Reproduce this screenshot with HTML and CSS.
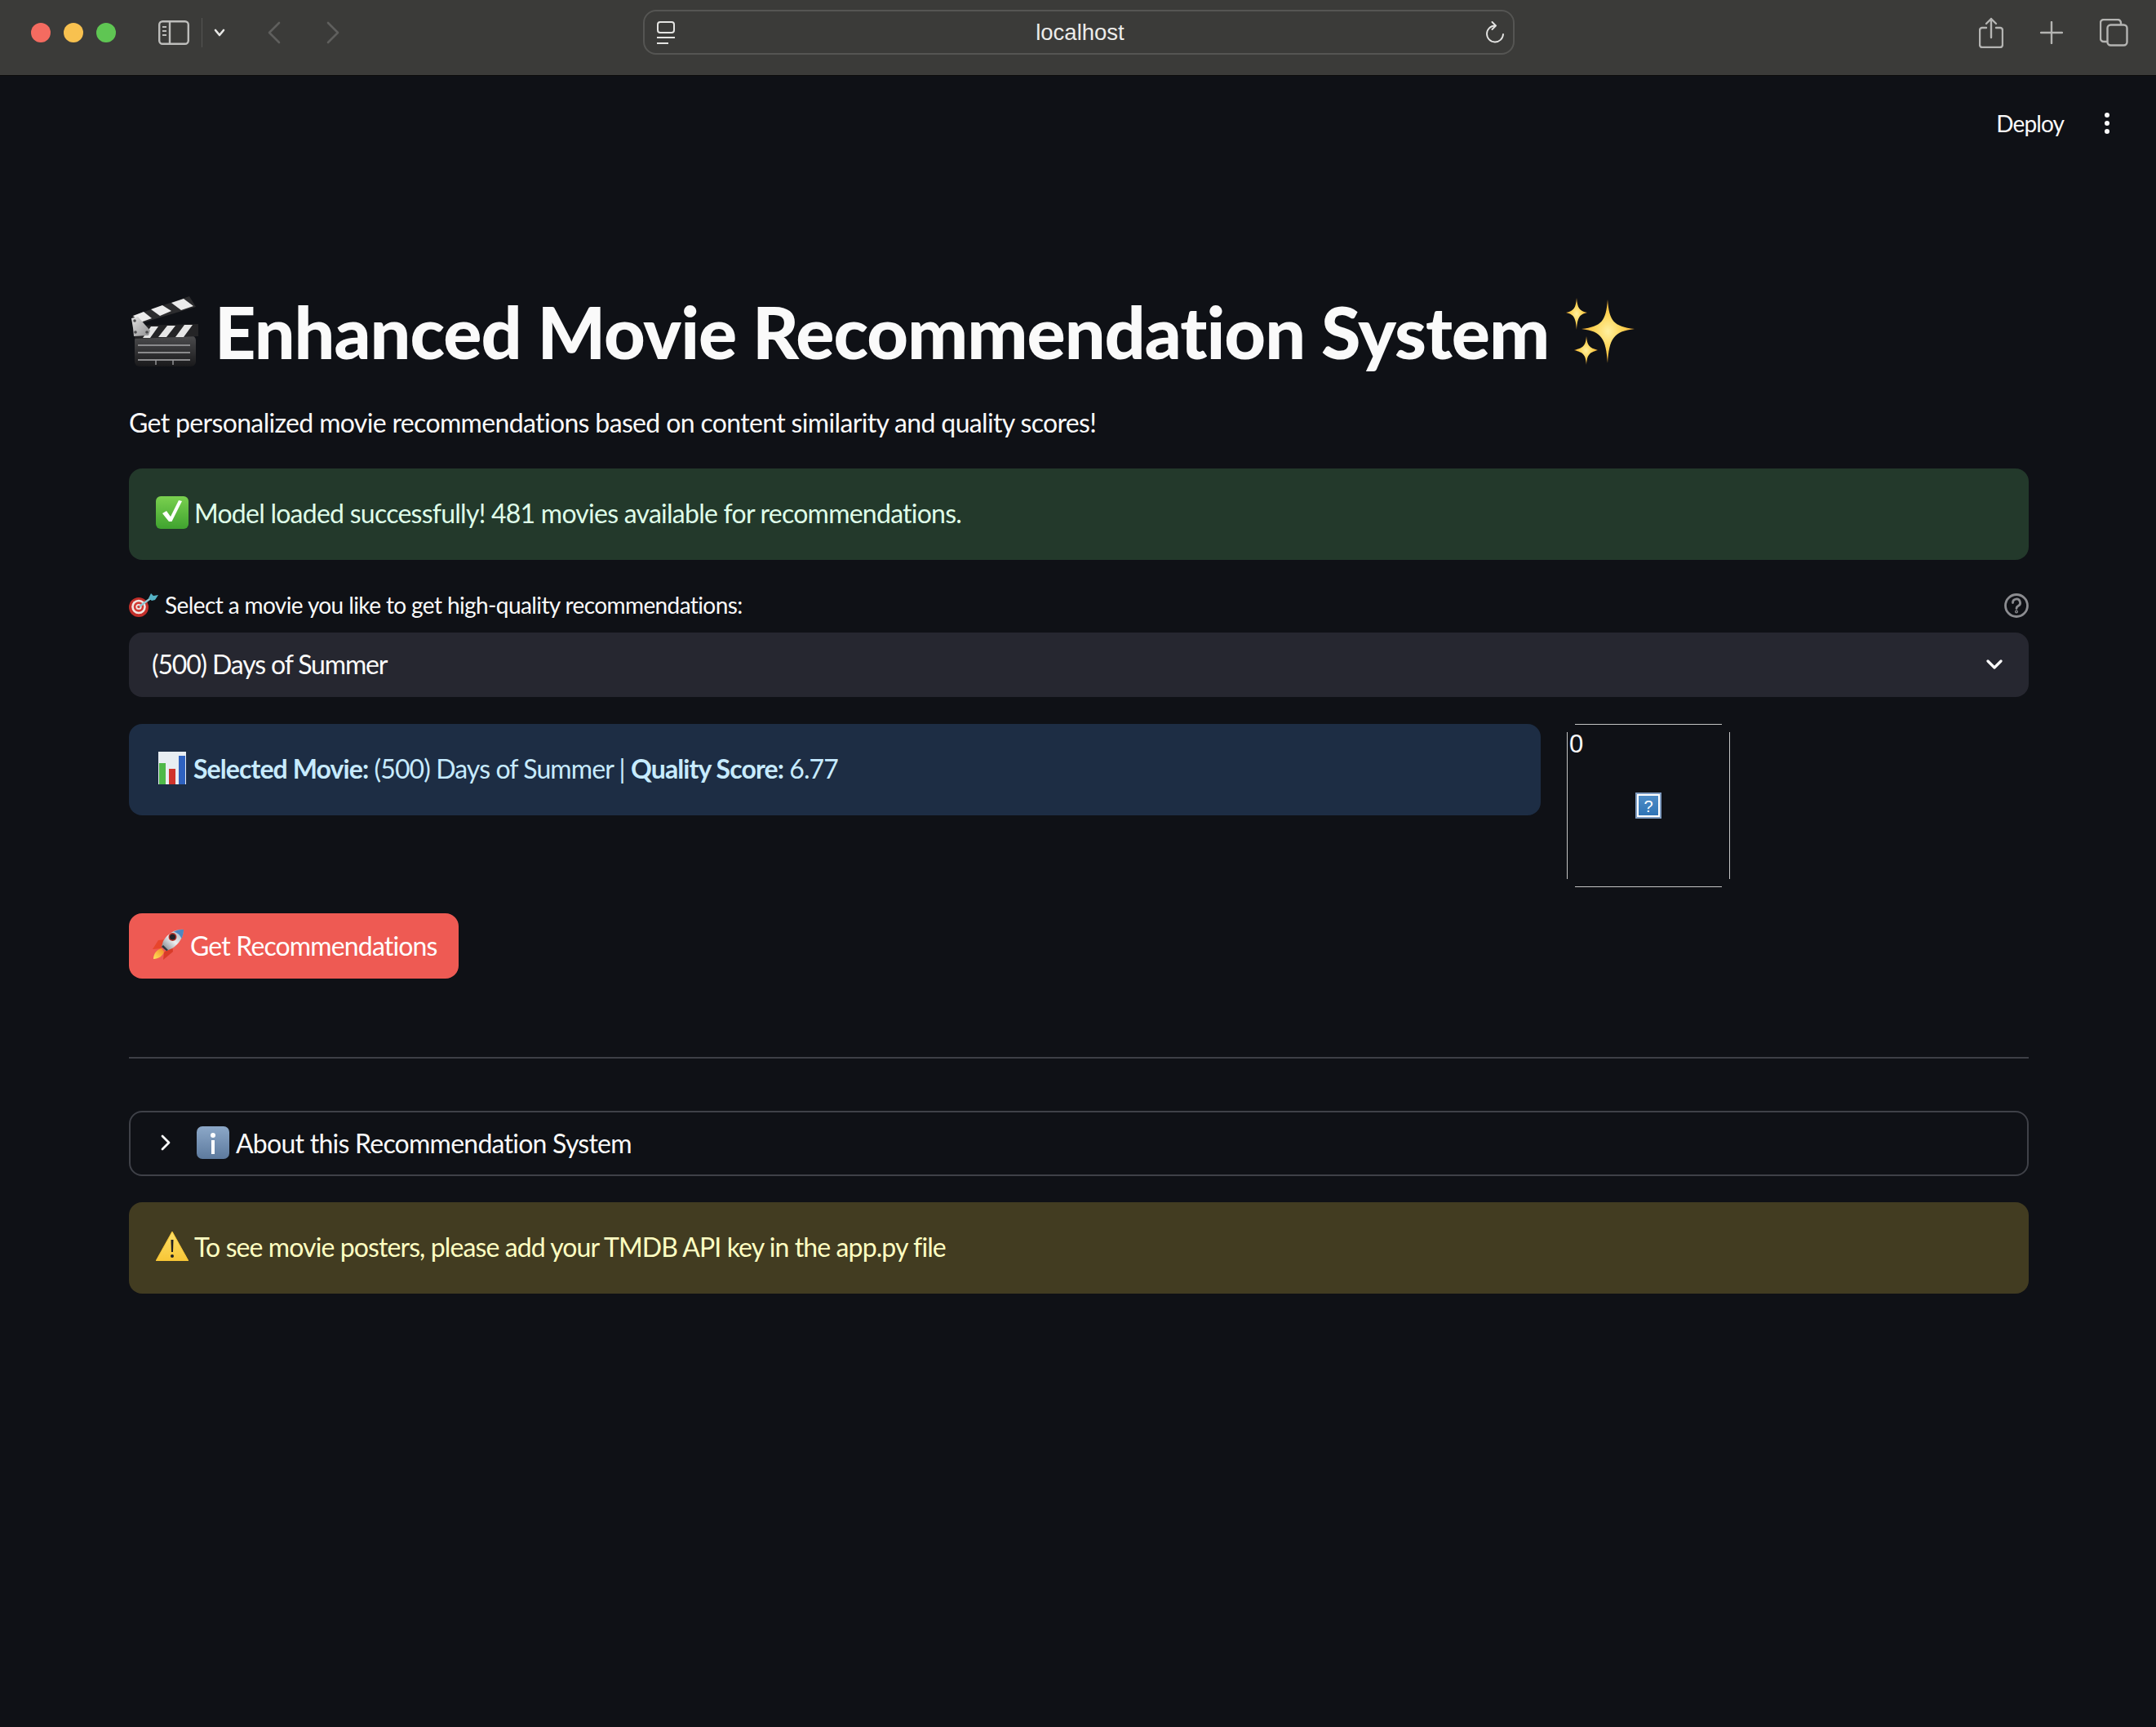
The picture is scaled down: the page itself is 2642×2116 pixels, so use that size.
FILE: index.html
```html
<!DOCTYPE html>
<html lang="en">
<head>
  <meta charset="UTF-8">
  <title>localhost</title>
  <link rel="stylesheet" href="styles.css">
</head>
<body>

  <div class="browser-bar">
    <div class="bar-left">
      <span class="light red"></span>
      <span class="light yellow"></span>
      <span class="light green"></span>
      <svg class="icon-sidebar" viewBox="0 0 38 30" fill="none" stroke="#bdbdbb" stroke-width="2.4">
        <rect x="1.2" y="1.2" width="35.6" height="27.6" rx="4"/>
        <path d="M14 1v28"/>
        <path d="M5 8h5M5 13h5M5 18h5" stroke-width="2"/>
      </svg>
      <span class="bar-divider"></span>
      <svg class="icon-down" viewBox="0 0 14 10" fill="none" stroke="#e8e8e6" stroke-width="2.6" stroke-linecap="round" stroke-linejoin="round">
        <path d="M2 2l5 6 5-6"/>
      </svg>
      <svg class="icon-back" viewBox="0 0 16 28" fill="none" stroke="#5f5f5d" stroke-width="2.6" stroke-linecap="round" stroke-linejoin="round">
        <path d="M14 2L2 14l12 12"/>
      </svg>
      <svg class="icon-forward" viewBox="0 0 16 28" fill="none" stroke="#5f5f5d" stroke-width="2.6" stroke-linecap="round" stroke-linejoin="round">
        <path d="M2 2l12 12L2 26"/>
      </svg>
    </div>
    <div class="url-bar">
      <svg class="icon-page" viewBox="0 0 22 28" fill="none" stroke="#e4e4e2" stroke-width="2">
        <rect x="1" y="1" width="20" height="13" rx="3"/>
        <path d="M0 20h22M0 27h14"/>
      </svg>
      <span class="url-text">localhost</span>
      <svg class="icon-reload" viewBox="0 0 24 28" fill="none" stroke="#e4e4e2" stroke-width="1.9" stroke-linecap="round" stroke-linejoin="round">
        <path d="M12 5.500A10 10 0 1 0 22 16"/>
        <path d="M8.500 1l4.500 4.500-4.500 4.500"/>
      </svg>
    </div>
    <div class="bar-right">
      <svg class="icon-share" viewBox="0 0 30 38" fill="none" stroke="#b4b4b2" stroke-width="2.4" stroke-linecap="round" stroke-linejoin="round">
        <path d="M9 13H4a3 3 0 0 0-3 3v18a3 3 0 0 0 3 3h22a3 3 0 0 0 3-3V16a3 3 0 0 0-3-3h-5"/>
        <path d="M15 25V2M9 8l6-6 6 6"/>
      </svg>
      <svg class="icon-plus" viewBox="0 0 28 28" fill="none" stroke="#b4b4b2" stroke-width="2.4" stroke-linecap="round">
        <path d="M14 1v26M1 14h26"/>
      </svg>
      <svg class="icon-tabs" viewBox="0 0 35 34" fill="none" stroke="#b4b4b2" stroke-width="2.4">
        <path d="M26 7V5a4 4 0 0 0-4-4H5a4 4 0 0 0-4 4v19a4 4 0 0 0 4 4h4"/>
        <rect x="9.500" y="7.500" width="24" height="25" rx="4"/>
      </svg>
    </div>
  </div>

  <div class="app">
    <div class="app-header">
      <span class="deploy">Deploy</span>
      <span class="menu-dots"><i></i><i></i><i></i></span>
    </div>

    <h1 class="title">
      <svg class="emoji-clapper" viewBox="0 0 87 86">
        <defs>
          <linearGradient id="clapBody" x1="0" y1="0" x2="0" y2="1">
            <stop offset="0" stop-color="#4c4c4e"/>
            <stop offset="1" stop-color="#19191b"/>
          </linearGradient>
          <linearGradient id="hinge" x1="0" y1="0" x2="1" y2="1">
            <stop offset="0" stop-color="#e2e2e2"/>
            <stop offset="1" stop-color="#8f8f91"/>
          </linearGradient>
        </defs>
        <rect x="7" y="48" width="75" height="38" rx="6" fill="url(#clapBody)"/>
        <path d="M7 36L85 34v15L7 52z" fill="#242426"/>
        <path d="M27 37h9L26 51h-9zM47 36h10L46 50h-10zM68 35h10L67 50H57z" fill="#e6e6e6"/>
        <path d="M4 24L74 0l8 13L8 35z" fill="#2c2c2e"/>
        <path d="M5 24l13-5 10 8-14 5zM27 16l14-5 11 7-14 6zM52 8l15-5 12 9-15 5z" fill="#ececec"/>
        <path d="M3 27l8-2 15 17-2 6-18 1-1-10z" fill="url(#hinge)"/>
        <circle cx="7" cy="30" r="1.800" fill="#4a4a4c"/>
        <circle cx="8" cy="44" r="1.800" fill="#4a4a4c"/>
        <circle cx="22" cy="44" r="1.800" fill="#4a4a4c"/>
        <path d="M11 60h64M11 69h64M11 78h64" stroke="#8a8a8c" stroke-width="2"/>
        <path d="M33 78v6M54 78v6" stroke="#9a9a9c" stroke-width="1.400"/>
      </svg>
      <span class="title-text">Enhanced Movie Recommendation System</span>
      <svg class="emoji-sparkles" viewBox="0 0 84 82">
        <defs>
          <radialGradient id="spark">
            <stop offset="0" stop-color="#fff0a0"/>
            <stop offset="0.5" stop-color="#fdd65a"/>
            <stop offset="1" stop-color="#f5ad2e"/>
          </radialGradient>
        </defs>
        <path d="M51 2C53 28 58 35 84 38C58 41 53 50 51 80C49 50 44 41 19 38C44 35 49 28 51 2Z" fill="url(#spark)"/>
        <path d="M13 0C14 12 16 16 26 18C16 20 14 25 13 39C12 25 10 20 0 18C10 16 12 12 13 0Z" fill="url(#spark)"/>
        <path d="M25 47C26 58 28 61 39 64C28 67 26 70 25 82C24 70 22 67 10 64C22 61 24 58 25 47Z" fill="url(#spark)"/>
      </svg>
    </h1>

    <p class="subtitle">Get personalized movie recommendations based on content similarity and quality scores!</p>

    <div class="alert alert-success">
      <svg class="emoji" viewBox="0 0 40 40">
        <defs>
          <linearGradient id="checkBg" x1="0" y1="0" x2="0" y2="1">
            <stop offset="0" stop-color="#7ad04f"/>
            <stop offset="1" stop-color="#3fa32f"/>
          </linearGradient>
        </defs>
        <rect width="40" height="40" rx="6" fill="url(#checkBg)"/>
        <path d="M8 21l8 10 3.500 0L32 6l-4-1-10 20-5-7z" fill="#fff"/>
      </svg>
      <span>Model loaded successfully! 481 movies available for recommendations.</span>
    </div>

    <div class="field-label">
      <span class="label-text">
        <svg class="emoji-target" viewBox="0 0 36 32">
          <circle cx="12" cy="18" r="12" fill="#c22f2a"/>
          <circle cx="12" cy="17.500" r="8.800" fill="#f1e6e2"/>
          <circle cx="12" cy="17.500" r="6.200" fill="#d23a33"/>
          <circle cx="12" cy="17.500" r="3.600" fill="#f1e6e2"/>
          <circle cx="12" cy="17.500" r="1.800" fill="#d23a33"/>
          <path d="M13 17L28 6" stroke="#8fc7d2" stroke-width="2.400"/>
          <path d="M24 7l3-6 3 3 6-1-4 6-4 1z" fill="#55b3c6"/>
        </svg>
        <span class="label-copy">Select a movie you like to get high-quality recommendations:</span>
      </span>
      <svg class="icon-help" viewBox="0 0 30 30" fill="none" stroke="#8b8c90" stroke-width="2.800" stroke-linecap="round">
        <circle cx="15" cy="15" r="13.500"/>
        <path d="M10.500 11.500a4.500 4.500 0 1 1 6.500 4c-1.400.8-2 1.500-2 3"/>
        <circle cx="15" cy="22.500" r="0.600"/>
      </svg>
    </div>

    <div class="select-box">
      <span>(500) Days of Summer</span>
      <svg class="icon-chevron" viewBox="0 0 20 12" fill="none" stroke="#fafafa" stroke-width="3.200" stroke-linecap="round" stroke-linejoin="round">
        <path d="M2 2l8 8 8-8"/>
      </svg>
    </div>

    <div class="movie-row">
      <div class="alert alert-info">
        <svg class="emoji-chart" viewBox="0 0 34 40">
          <rect width="34" height="40" fill="#e8edf2"/>
          <rect x="1" y="14" width="8" height="26" fill="#4fb848"/>
          <rect x="13" y="21" width="8" height="19" fill="#d0342c"/>
          <rect x="25" y="5" width="8" height="35" fill="#2f62c0"/>
        </svg>
        <span><strong>Selected Movie:</strong> (500) Days of Summer | <strong>Quality Score:</strong> 6.77</span>
      </div>
      <div class="poster">
        <svg viewBox="0 0 200 200" class="poster-frame">
          <defs>
            <linearGradient id="qBg" x1="0" y1="0" x2="0" y2="1">
              <stop offset="0" stop-color="#4f8dc7"/>
              <stop offset="1" stop-color="#2f74b5"/>
            </linearGradient>
          </defs>
          <path d="M10 0.500h180M10 199.500h180M0.500 10v180M199.500 10v180" stroke="#c4c4c4" stroke-width="1"/>
          <rect x="84" y="84" width="32" height="32" fill="#7f9cc0"/>
          <rect x="86" y="86" width="28" height="28" fill="#fff"/>
          <rect x="88" y="88" width="24" height="24" fill="url(#qBg)"/>
          <text x="100" y="108" class="poster-q">?</text>
        </svg>
        <span class="poster-alt">0</span>
      </div>
    </div>

    <button class="primary-btn">
      <svg class="emoji-rocket" viewBox="0 0 40 40">
        <defs>
          <linearGradient id="rocketBody" x1="0" y1="1" x2="1" y2="0">
            <stop offset="0" stop-color="#6f7278"/>
            <stop offset="0.5" stop-color="#eceef1"/>
            <stop offset="1" stop-color="#9aa3ad"/>
          </linearGradient>
          <linearGradient id="flame" x1="0" y1="1" x2="1" y2="0">
            <stop offset="0" stop-color="#ffe45c"/>
            <stop offset="1" stop-color="#f08a24"/>
          </linearGradient>
        </defs>
        <path d="M1 25L8 14l10-1-6 11z" fill="#e8452c"/>
        <path d="M14 38l1-9 10-9 1 8z" fill="#d93b28"/>
        <path d="M2 37C2 30 7 25 12 24l3 4C14 33 8 37 2 37z" fill="url(#flame)"/>
        <path d="M39 1C30 0 20 5 14 15l-2 7 6 5 7-3C33 19 39 10 39 1z" fill="url(#rocketBody)"/>
        <path d="M39 1c-5-.5-9 1-12 2.500 5 1.500 8 4.500 9.500 8.500C38 8 39 5 39 1z" fill="#4d86c0"/>
        <circle cx="25.500" cy="10" r="5" fill="#b8362c"/>
        <circle cx="25.500" cy="10" r="3.500" fill="#23242a"/>
        <path d="M12 22l6 5 2-1-6-6z" fill="#31343c"/>
      </svg>
      <span>Get Recommendations</span>
    </button>

    <hr class="divider">

    <div class="expander">
      <svg class="icon-right" viewBox="0 0 12 20" fill="none" stroke="#fafafa" stroke-width="2.800" stroke-linecap="round" stroke-linejoin="round">
        <path d="M2 2l8 8-8 8"/>
      </svg>
      <svg class="emoji" viewBox="0 0 40 40">
        <defs>
          <linearGradient id="infoBg" x1="0" y1="0" x2="0" y2="1">
            <stop offset="0" stop-color="#8ca8c8"/>
            <stop offset="1" stop-color="#5d7a9e"/>
          </linearGradient>
        </defs>
        <rect width="40" height="40" rx="7" fill="url(#infoBg)"/>
        <circle cx="20" cy="11" r="3" fill="#fff"/>
        <path d="M18 17h4v17h-4z" fill="#fff"/>
      </svg>
      <span>About this Recommendation System</span>
    </div>

    <div class="alert alert-warning">
      <svg class="emoji" viewBox="0 0 40 36">
        <defs>
          <linearGradient id="warnBg" x1="0" y1="0" x2="0" y2="1">
            <stop offset="0" stop-color="#fce06a"/>
            <stop offset="1" stop-color="#f8c636"/>
          </linearGradient>
        </defs>
        <path d="M20 0L40 36H0z" fill="url(#warnBg)" stroke="#f8c636" stroke-linejoin="round"/>
        <path d="M18.500 10h3l-.5 15h-2z" fill="#222"/>
        <circle cx="20" cy="30" r="2" fill="#222"/>
      </svg>
      <span>To see movie posters, please add your TMDB API key in the app.py file</span>
    </div>
  </div>

</body>
</html>
```

FILE: styles.css
```css
* {
  box-sizing: border-box;
}

body {
  margin: 0;
  background: #0f1116;
  color: #fafafa;
  font-family: "Lato", sans-serif;
  font-size: 32px;
  font-variant-ligatures: none;
  min-height: 2116px;
}

svg {
  display: block;
  flex: none;
}

/* browser chrome */
.browser-bar {
  display: flex;
  height: 93px;
  background: #3b3b39;
  border-bottom: 1px solid #0a0a0a;
}

.bar-left {
  display: flex;
  align-items: center;
  width: 788px;
  padding: 0 0 12px 38px;
}

.light {
  width: 24px;
  height: 24px;
  border-radius: 50%;
  margin-right: 16px;
}

.red { background: #f46b60; }
.yellow { background: #f8c14f; }
.green { background: #5fc653; }

.icon-sidebar {
  width: 38px;
  height: 30px;
  margin-left: 36px;
}

.bar-divider {
  width: 1px;
  height: 36px;
  background: #555553;
  margin-left: 15px;
}

.icon-down {
  width: 14px;
  height: 10px;
  margin-left: 14px;
}

.icon-back {
  width: 16px;
  height: 28px;
  margin-left: 52px;
}

.icon-forward {
  width: 16px;
  height: 28px;
  margin-left: 56px;
}

.url-bar {
  display: flex;
  align-items: center;
  justify-content: space-between;
  width: 1068px;
  height: 55px;
  margin-top: 12px;
  padding: 0 10px 0 15px;
  border: 2px solid #555553;
  border-radius: 16px;
}

.icon-page {
  width: 22px;
  height: 28px;
}

.url-text {
  font-family: "Liberation Sans", sans-serif;
  font-size: 27.500px;
  color: #ececea;
}

.icon-reload {
  width: 24px;
  height: 28px;
}

.bar-right {
  display: flex;
  align-items: center;
  flex: 1;
  padding: 0 0 13px 569px;
}

.icon-share {
  width: 30px;
  height: 38px;
}

.icon-plus {
  width: 28px;
  height: 28px;
  margin-left: 45px;
}

.icon-tabs {
  width: 35px;
  height: 34px;
  margin-left: 45px;
}

/* app */
.app {
  padding: 0 156px 0 158px;
}

.app-header {
  display: flex;
  justify-content: flex-end;
  align-items: center;
  height: 115px;
  margin-right: -99px;
  font-size: 28px;
  letter-spacing: -0.900px;
}

.menu-dots {
  display: flex;
  flex-direction: column;
  gap: 4px;
  margin-left: 50px;
}

.menu-dots i {
  width: 6px;
  height: 6px;
  border-radius: 50%;
  background: #fafafa;
}

.title {
  display: flex;
  align-items: center;
  height: 94px;
  margin: 150px 0 0;
  padding-top: 1px;
  font-size: 88px;
  font-weight: 900;
  line-height: 94px;
  letter-spacing: -1px;
}

.emoji-clapper {
  width: 87px;
  height: 86px;
}

.title-text {
  margin-left: 18px;
}

.emoji-sparkles {
  width: 84px;
  height: 82px;
  margin-left: 21px;
}

.subtitle {
  height: 48px;
  margin: 44px 0 30px;
  line-height: 44px;
  letter-spacing: -0.650px;
}

.alert {
  display: flex;
  align-items: center;
  gap: 7px;
  height: 112px;
  padding: 0 33px 4px;
  border-radius: 16px;
}

.emoji {
  width: 40px;
  height: 40px;
}

.alert-success {
  background: #23392b;
  color: #dffde9;
  letter-spacing: -0.750px;
}

.alert-info {
  flex: 0 0 1730px;
  background: #1d2d44;
  color: #c7ebff;
  letter-spacing: -0.900px;
}

.alert-warning {
  margin-top: 32px;
  background: #423c21;
  color: #ffffc2;
  letter-spacing: -0.900px;
}

.alert-warning .emoji {
  height: 36px;
}

.field-label {
  display: flex;
  align-items: center;
  justify-content: space-between;
  height: 40px;
  margin-top: 36px;
  font-size: 28px;
  letter-spacing: -0.600px;
}

.label-text {
  display: flex;
  align-items: center;
  gap: 8px;
}

.label-copy {
  padding-bottom: 3px;
}

.emoji-target {
  width: 36px;
  height: 32px;
}

.icon-help {
  width: 30px;
  height: 30px;
}

.select-box {
  display: flex;
  align-items: center;
  justify-content: space-between;
  height: 79px;
  margin-top: 13px;
  padding: 0 32px 2px 28px;
  background: #262730;
  border-radius: 16px;
  letter-spacing: -1.150px;
}

.icon-chevron {
  width: 20px;
  height: 12px;
}

.movie-row {
  display: flex;
  gap: 32px;
  margin-top: 33px;
  align-items: flex-start;
}

.emoji-chart {
  width: 34px;
  height: 40px;
  margin-left: 3px;
  margin-right: 2px;
}

.poster {
  position: relative;
  width: 200px;
  height: 200px;
}

.poster-frame {
  width: 200px;
  height: 200px;
}

.poster-q {
  font-family: "Liberation Sans", sans-serif;
  font-size: 20px;
  fill: #fff;
  text-anchor: middle;
}

.poster-alt {
  position: absolute;
  top: 8px;
  left: 3px;
  font-family: "Liberation Sans", sans-serif;
  font-size: 31px;
  line-height: 34px;
}

.primary-btn {
  display: flex;
  align-items: center;
  gap: 7px;
  width: 404px;
  height: 80px;
  margin-top: 32px;
  padding: 0 0 2px 28px;
  background: #ee5a53;
  border: none;
  border-radius: 16px;
  color: #fff;
  font: inherit;
  font-variant-ligatures: none;
  letter-spacing: -0.850px;
}

.emoji-rocket {
  width: 40px;
  height: 40px;
}

.divider {
  height: 2px;
  margin: 96px 0 0;
  background: #3d3f46;
  border: none;
}

.expander {
  display: flex;
  align-items: center;
  gap: 8px;
  height: 80px;
  margin-top: 64px;
  padding: 0 0 2px 37px;
  border: 2px solid #3f4148;
  border-radius: 16px;
  letter-spacing: -0.750px;
}

.icon-right {
  width: 12px;
  height: 20px;
  margin-right: 24px;
}
```
